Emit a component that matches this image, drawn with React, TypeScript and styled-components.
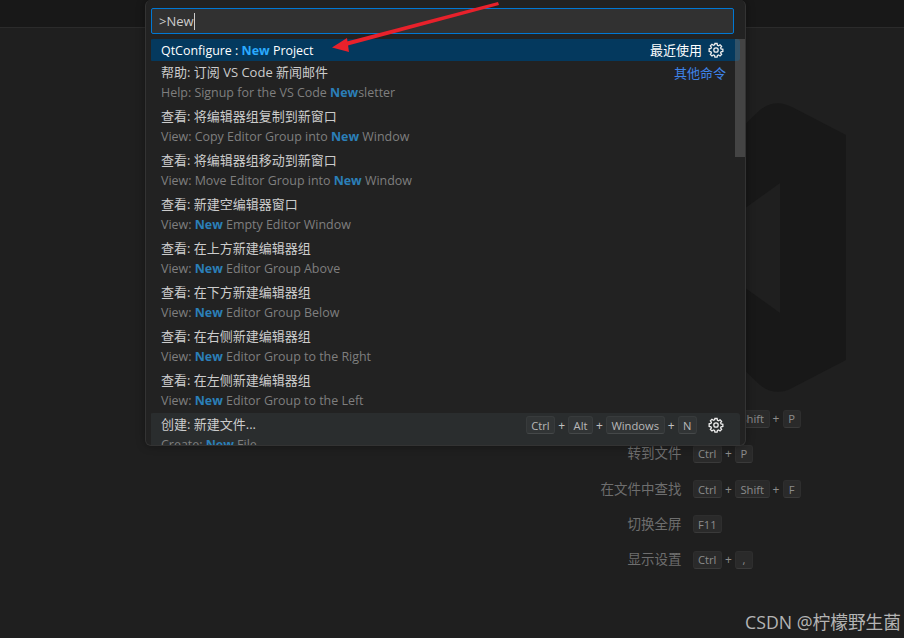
import { Fragment } from 'react';
import styled, { createGlobalStyle } from 'styled-components';

const GlobalStyle = createGlobalStyle`
  html, body {
    margin: 0;
    padding: 0;
    background: #1f1f1f;
  }
  * {
    box-sizing: border-box;
  }
`;

const FONT = `"Open Sans", "Noto Sans CJK SC", sans-serif`;

const Window = styled.div`
  position: relative;
  width: 904px;
  height: 638px;
  overflow: hidden;
  background: #1f1f1f;
  font-family: ${FONT};
  font-size: 13px;
`;

const TitleBar = styled.div`
  height: 28px;
  background: #181818;
  border-bottom: 1px solid #2b2b2b;
`;

const Editor = styled.div`
  display: flex;
  flex-direction: column;
  gap: 17.25px;
  padding: 381.5px 0 0 599.5px;
`;

const Watermark = styled.svg`
  position: absolute;
  left: 640px;
  top: 100px;
  width: 210px;
  height: 295px;
`;

const Hint = styled.div`
  display: grid;
  grid-template-columns: 82px auto;
  column-gap: 11px;
  align-items: center;
  height: 18px;
`;

const HintLabel = styled.div`
  text-align: right;
  font-size: 13.5px;
  line-height: 16px;
  margin-top: -1px;
  color: #6e6e6e;
  white-space: nowrap;
`;

const Keys = styled.div`
  display: flex;
  align-items: center;
`;

const Key = styled.span<{ $bright?: boolean }>`
  display: inline-flex;
  align-items: center;
  justify-content: center;
  height: 18px;
  min-width: 18px;
  padding: 0 4.5px;
  font-size: 11.2px;
  color: ${(p) => (p.$bright ? '#b8b8b8' : '#8c8c8c')};
  background: ${(p) => (p.$bright ? '#313435' : '#2a2a2a')};
  border: 1px solid ${(p) => (p.$bright ? '#383b3c' : '#2e2e2e')};
  border-bottom-color: ${(p) => (p.$bright ? '#454849' : '#3a3a3a')};
  border-radius: 3px;
`;

const Plus = styled.span<{ $bright?: boolean }>`
  width: 13px;
  text-align: center;
  font-size: 12px;
  color: ${(p) => (p.$bright ? '#c0c0c0' : '#8c8c8c')};
`;

const Palette = styled.div`
  position: absolute;
  left: 145px;
  top: 0;
  width: 601px;
  height: 446px;
  display: flex;
  flex-direction: column;
  padding: 8px 0 0 5px;
  background: #222222;
  border: 1px solid #333333;
  border-top: none;
  border-radius: 6px;
  box-shadow: 0 0 8px rgba(0, 0, 0, 0.36);
  overflow: hidden;
`;

const InputBox = styled.div`
  flex: none;
  width: 583px;
  height: 26px;
  padding: 0 6px 0 7px;
  display: flex;
  align-items: center;
  font-size: 13px;
  color: #cccccc;
  background: #313131;
  border: 1px solid #0078d4;
  border-radius: 2px;
`;

const Caret = styled.span`
  width: 1px;
  height: 17px;
  background: #cccccc;
`;

const List = styled.div`
  position: relative;
  flex: 1;
  margin-top: 5px;
  overflow: hidden;
`;

const Scrollbar = styled.div`
  position: absolute;
  right: 0;
  top: 0;
  width: 10px;
  height: 118px;
  background: rgba(121, 121, 121, 0.4);
`;

const Row = styled.div<{ $state?: 'selected' | 'hover'; $single?: boolean }>`
  position: relative;
  width: 590px;
  margin-left: -1px;
  margin-top: ${(p) => (p.$state === 'hover' ? '-1px' : '0')};
  margin-bottom: ${(p) => (p.$single ? '1px' : '0')};
  height: ${(p) => (p.$single ? '22px' : '44px')};
  padding: ${(p) => (p.$state === 'hover' ? '1px' : '0')} 14px 0 11px;
  border-radius: 3px;
  background: ${(p) =>
    p.$state === 'selected' ? '#04395e' : p.$state === 'hover' ? '#2a2d2e' : 'transparent'};
`;

const RowLine = styled.div`
  display: flex;
  align-items: center;
  justify-content: space-between;
  height: 22px;
`;

const Title = styled.span<{ $selected?: boolean }>`
  color: ${(p) => (p.$selected ? '#ffffff' : '#cccccc')};
  font-size: ${(p) => (p.$selected ? '12.45px' : '13px')};
  white-space: nowrap;
  line-height: 18px;
  margin-top: ${(p) => (p.$selected ? '1px' : '-2px')};
`;

const Detail = styled.div`
  height: 22px;
  line-height: 18px;
  font-size: 12.45px;
  color: #7f7f7f;
  white-space: nowrap;
`;

const Match = styled.b<{ $selected?: boolean }>`
  font-weight: 700;
  color: ${(p) => (p.$selected ? '#2aaaff' : '#2b7fb8')};
`;

const Side = styled.div<{ $gap: number }>`
  display: flex;
  align-items: center;
  gap: ${(p) => p.$gap}px;
`;

const RecentLabel = styled.span`
  color: #ffffff;
  margin-top: -1px;
`;

const Other = styled.span`
  color: #3f83e8;
  margin-top: -1px;
`;

const GearButton = styled.svg`
  display: block;
  width: 16px;
  height: 16px;
  margin-right: 2px;
`;

const Arrow = styled.svg`
  position: absolute;
  left: 320px;
  top: 0;
  width: 190px;
  height: 60px;
  pointer-events: none;
`;

const Credit = styled.div`
  position: absolute;
  right: 3px;
  bottom: 4px;
  font-size: 17.7px;
  line-height: 24px;
  color: #b4b4b4;
  white-space: nowrap;
`;

const Gear = () => (
  <GearButton viewBox="0 0 16 16" fill="none" stroke="#eeeeee" strokeWidth="1.3">
    <path d="M6.9 1.5h2.2l.35 1.8 1.1.46 1.52-1.03 1.55 1.55-1.03 1.52.46 1.1 1.8.35v2.2l-1.8.35-.46 1.1 1.03 1.52-1.55 1.55-1.52-1.03-1.1.46-.35 1.8H6.9l-.35-1.8-1.1-.46-1.52 1.03-1.55-1.55 1.03-1.52-.46-1.1-1.8-.35V6.75l1.8-.35.46-1.1-1.03-1.52 1.55-1.55 1.52 1.03 1.1-.46z" />
    <circle cx="8" cy="8" r="2.2" />
  </GearButton>
);

const commands: { title: string; before: string; after: string; other?: boolean }[] = [
  { title: '帮助: 订阅 VS Code 新闻邮件', before: 'Help: Signup for the VS Code ', after: 'sletter', other: true },
  { title: '查看: 将编辑器组复制到新窗口', before: 'View: Copy Editor Group into ', after: ' Window' },
  { title: '查看: 将编辑器组移动到新窗口', before: 'View: Move Editor Group into ', after: ' Window' },
  { title: '查看: 新建空编辑器窗口', before: 'View: ', after: ' Empty Editor Window' },
  { title: '查看: 在上方新建编辑器组', before: 'View: ', after: ' Editor Group Above' },
  { title: '查看: 在下方新建编辑器组', before: 'View: ', after: ' Editor Group Below' },
  { title: '查看: 在右侧新建编辑器组', before: 'View: ', after: ' Editor Group to the Right' },
  { title: '查看: 在左侧新建编辑器组', before: 'View: ', after: ' Editor Group to the Left' },
];

// the first hint's label sits fully behind the palette, so it is left empty
const hints = [
  { label: '', keys: ['Ctrl', 'Shift', 'P'] },
  { label: '转到文件', keys: ['Ctrl', 'P'] },
  { label: '在文件中查找', keys: ['Ctrl', 'Shift', 'F'] },
  { label: '切换全屏', keys: ['F11'] },
  { label: '显示设置', keys: ['Ctrl', ','] },
];

const KeyCombo = ({ keys, bright }: { keys: string[]; bright?: boolean }) => (
  <Keys>
    {keys.map((k, i) => (
      <Fragment key={k}>
        {i > 0 && <Plus $bright={bright}>+</Plus>}
        <Key $bright={bright}>{k}</Key>
      </Fragment>
    ))}
  </Keys>
);

export default function App() {
  return (
    <Window>
      <GlobalStyle />
      <TitleBar />
      <Watermark viewBox="640 100 210 295">
        <path
          d="M640 225 L760 110 Q775 98 792 107 L846 135 V360 L792 388 Q775 397 760 385 L640 270 Z"
          fill="#181818"
        />
        <path d="M780 183 V313 L690 248 Z" fill="#1f1f1f" />
      </Watermark>
      <Editor>
        {hints.map((h) => (
          <Hint key={h.keys.join('+')}>
            <HintLabel>{h.label}</HintLabel>
            <KeyCombo keys={h.keys} />
          </Hint>
        ))}
      </Editor>

      <Palette>
        <InputBox>
          {'>'}New
          <Caret />
        </InputBox>
        <List>
          <Row $state="selected" $single>
            <RowLine>
              <Title $selected>
                QtConfigure : <Match $selected>New</Match> Project
              </Title>
              <Side $gap={6}>
                <RecentLabel>最近使用</RecentLabel>
                <Gear />
              </Side>
            </RowLine>
          </Row>
          {commands.map((c) => (
            <Row key={c.title}>
              <RowLine>
                <Title>{c.title}</Title>
                {c.other && <Other>其他命令</Other>}
              </RowLine>
              <Detail>
                {c.before}
                <Match>New</Match>
                {c.after}
              </Detail>
            </Row>
          ))}
          <Row $state="hover">
            <RowLine>
              <Title>创建: 新建文件...</Title>
              <Side $gap={11}>
                <KeyCombo keys={['Ctrl', 'Alt', 'Windows', 'N']} bright />
                <Gear />
              </Side>
            </RowLine>
            <Detail>
              Create: <Match>New</Match> File
            </Detail>
          </Row>
          <Scrollbar />
        </List>
      </Palette>

      <Arrow viewBox="320 0 190 60">
        <path d="M498 2 L499 5 L346 46 L345 42 Z" fill="#e8212b" />
        <path d="M332 47.5 L347 38 L349 52 Z" fill="#e8212b" />
      </Arrow>
      <Credit>CSDN @柠檬野生菌</Credit>
    </Window>
  );
}
